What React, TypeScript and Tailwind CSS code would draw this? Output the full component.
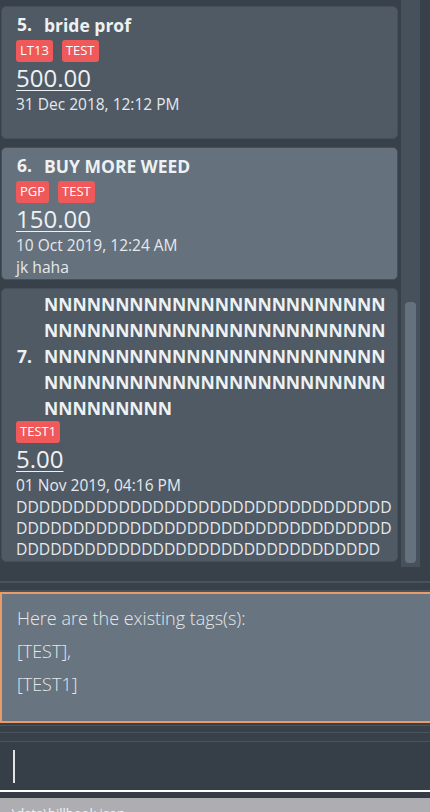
import React from 'react'

type Entry = {
    index: number
    title: string
    tags: string[]
    amount: string
    date: string
    note: string
    selected?: boolean
}

const entries: Entry[] = [
    { index: 5, title: 'bride prof', tags: ['LT13', 'TEST'], amount: '500.00', date: '31 Dec 2018, 12:12 PM', note: '' },
    { index: 6, title: 'BUY MORE WEED', tags: ['PGP', 'TEST'], amount: '150.00', date: '10 Oct 2019, 12:24 AM', note: 'jk haha', selected: true },
    { index: 7, title: 'N'.repeat(105), tags: ['TEST1'], amount: '5.00', date: '01 Nov 2019, 04:16 PM', note: 'D'.repeat(98) },
]

const font = { fontFamily: '"Open Sans", "Liberation Sans", sans-serif' }

const Card = ({ e }: { e: Entry }) => (
    <div
        className={`rounded-[5px] border border-[#46505b] pl-[14px] pr-[1px] pt-[2px] pb-[1px] text-[#eef1f3] ${
            e.selected ? 'bg-[#65717c]' : 'bg-[#4f5a65]'
        }`}>
        <div className="flex min-h-[31px] items-center">
            <span className="w-[28px] shrink-0 pl-[1px] text-[17.5px] font-bold">{e.index}.</span>
            <span className="min-w-0 break-all text-[17.5px] font-bold leading-[26px]">{e.title}</span>
        </div>
        <div className="flex h-[22px] gap-[9px]">
            {e.tags.map((t) => (
                <span key={t} className="flex h-[22px] items-center rounded-[3px] bg-[#ef5959] px-[4px] text-[13px] text-white">
                    {t}
                </span>
            ))}
        </div>
        <div className="h-[32px] text-[24px] leading-[32px]">
            <span className="underline decoration-1 underline-offset-[3px]">{e.amount}</span>
        </div>
        <div className="text-[15.5px] leading-[20px] text-[#e6e9ec]">{e.date}</div>
        <div className="mt-[2px] min-h-[21px] break-all text-[15.7px] leading-[21px] text-[#e6e9ec]">{e.note}</div>
    </div>
)

export default function App() {
    return (
        <div className="flex h-[812px] w-[430px] flex-col overflow-hidden bg-[#38404a]" style={font}>
            <div className="flex h-[581px] shrink-0">
                <div className="flex w-[401px] flex-col gap-[8px] pl-[1px] pr-[3px] pt-[6px]">
                    {entries.map((e) => (
                        <Card key={e.index} e={e} />
                    ))}
                </div>
                <div className="flex h-[567px] w-[19px] flex-col justify-end bg-[#47515b] px-[4px] pb-[4px]">
                    <div className="h-[261px] rounded-[4px] bg-[#65717c]" />
                </div>
            </div>
            <div className="h-[2px] shrink-0 bg-[#4a535d]" />
            <div className="h-[7px] shrink-0" />
            <div className="h-[2px] shrink-0 bg-[#4a535d]" />
            <div className="h-[131px] shrink-0 border-2 border-r-0 border-[#e99b6a] bg-[#68747f] px-[15px] pt-[8px] text-[18px] font-light leading-[33px] text-[#e4e8eb]">
                <div>Here are the existing tags(s):</div>
                <div>[TEST],</div>
                <div>[TEST1]</div>
            </div>
            <div className="h-[2px] shrink-0" />
            <div className="h-[1px] shrink-0 bg-[#4a535d]" />
            <div className="h-[6px] shrink-0" />
            <div className="h-[1px] shrink-0 bg-[#4a535d]" />
            <div className="h-[8px] shrink-0" />
            <div className="h-[1px] shrink-0 bg-[#4a535d]" />
            <div className="flex h-[48px] shrink-0 items-center bg-[#363e47] pl-[13px]">
                <div className="h-[33px] w-[2px] bg-[#dfe3e6]" />
            </div>
            <div className="h-[2px] shrink-0 bg-white" />
            <div className="h-[6px] shrink-0 bg-[#353c45]" />
            <div className="flex-1 bg-[#aeadb2] px-[8px] text-[13px] leading-[14px] text-[#f3f3f5]">
                <div className="pt-[8px]">.\data\billbook.json</div>
            </div>
        </div>
    )
}
